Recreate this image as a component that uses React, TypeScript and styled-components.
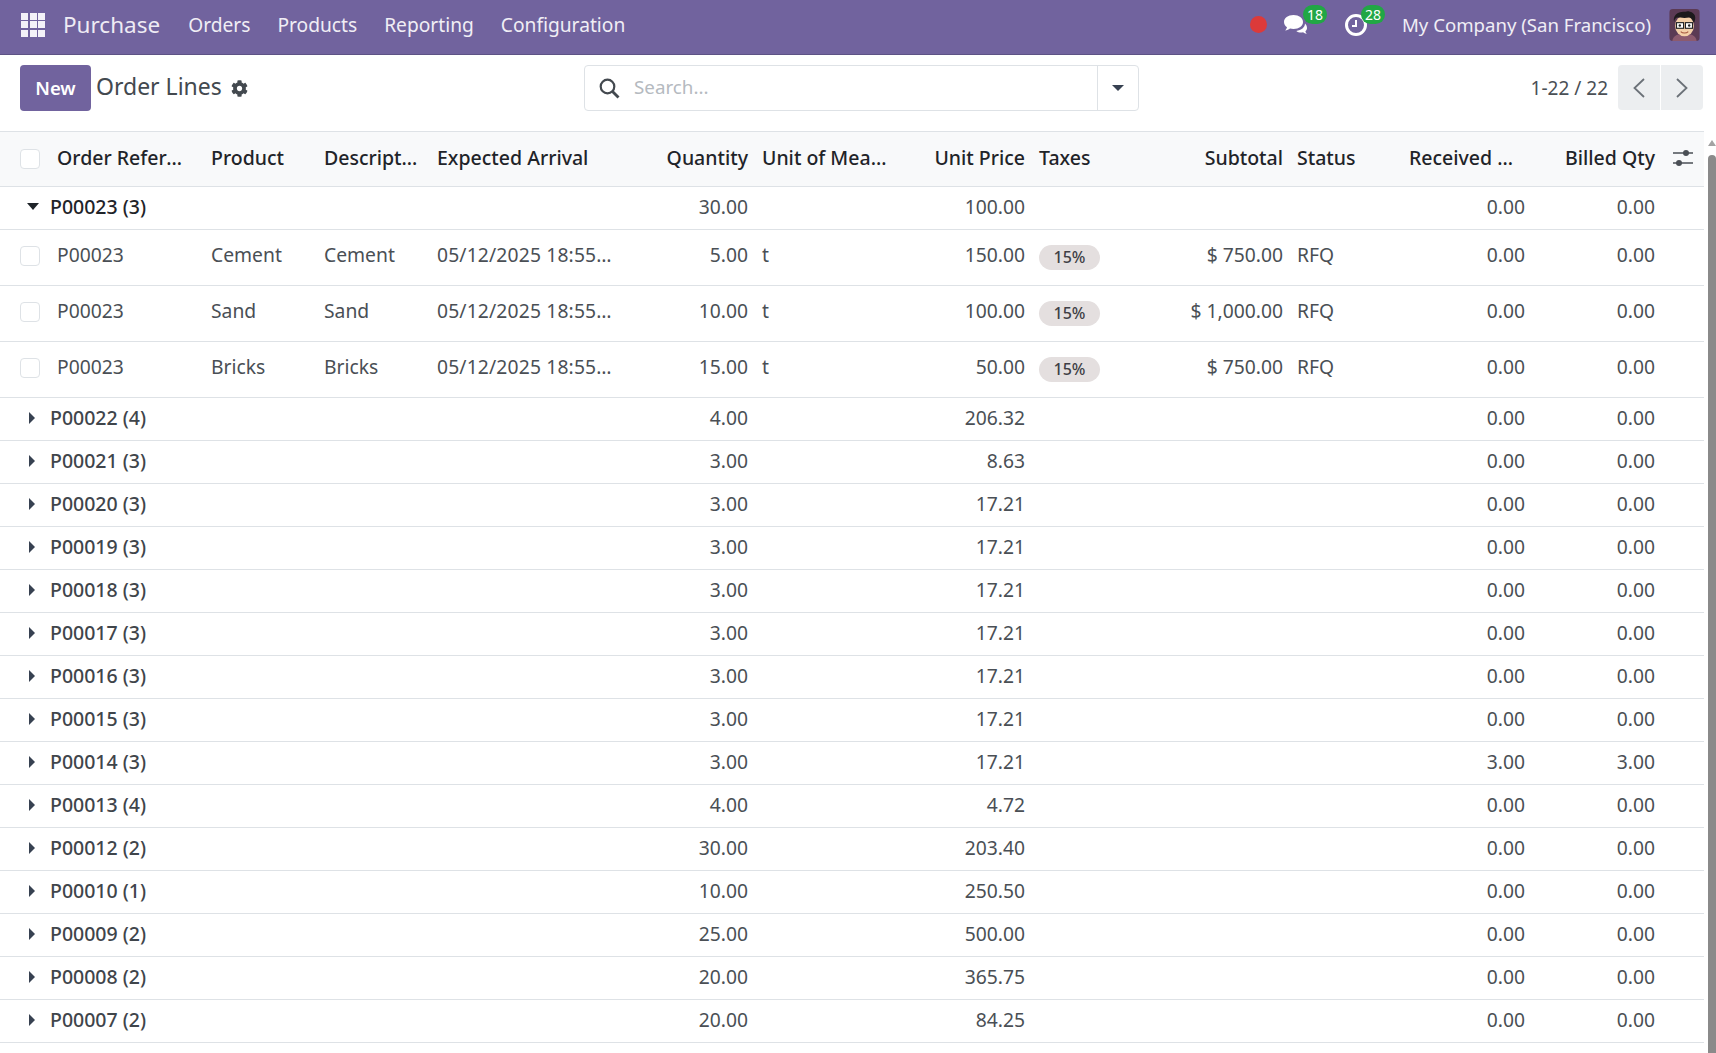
import React from "react";
import styled, { createGlobalStyle } from "styled-components";
import { FaCog } from "react-icons/fa";

const GlobalStyle = createGlobalStyle`
  html, body {
    margin: 0;
    height: 100%;
    overflow: hidden;
    background: #fff;
    font-family: "Noto Sans", "Open Sans", sans-serif;
    font-size: 19.3px;
    color: #4a4f55;
  }
`;

const Page = styled.div`
  width: 1716px;
  height: 1053px;
  display: flex;
  flex-direction: column;
  overflow: hidden;
`;

const Navbar = styled.header`
  height: 55px;
  flex: none;
  background: #71639e;
  border-bottom: 1px solid #5d5285;
  box-sizing: border-box;
  display: flex;
  align-items: center;
  color: #fff;
  padding: 0 16px 5px 21px;
`;

const AppsIcon = styled.div`
  width: 24px;
  height: 24px;
  display: grid;
  grid-template-columns: repeat(3, 7px);
  grid-auto-rows: 7px;
  gap: 1.5px;
  margin-right: 18px;
`;

const AppsDot = styled.span`
  background: #f4f2f8;
`;

const Brand = styled.div`
  font-size: 22.5px;
  margin-right: 28px;
  color: #eeebf4;
`;

const NavMenu = styled.nav`
  display: flex;
  gap: 27px;
  font-size: 19.2px;
  color: #f0eef5;
`;

const NavRight = styled.div`
  margin-left: auto;
  display: flex;
  align-items: center;
`;

const RecordDot = styled.span`
  width: 17px;
  height: 17px;
  border-radius: 50%;
  background: #dc3a3a;
  margin-right: 16px;
`;

const Systray = styled.div`
  position: relative;
  width: 26px;
  height: 26px;
  margin-right: 35px;
  display: flex;
  align-items: center;
`;

const CountBadge = styled.span<{ $left: number }>`
  position: absolute;
  left: ${p => p.$left}px;
  top: -7px;
  height: 19px;
  min-width: 24px;
  padding: 0 1px;
  box-sizing: border-box;
  border-radius: 10px;
  background: #21a745;
  color: #fff;
  font-size: 14px;
  line-height: 19px;
  text-align: center;
`;

const Company = styled.div`
  font-size: 18.6px;
  color: #f0eef5;
  margin-right: 18px;
  margin-left: -3px;
`;

const Avatar = styled.svg`
  width: 31px;
  height: 32px;
  border-radius: 4px;
  display: block;
`;

const ControlPanel = styled.section`
  height: 76px;
  flex: none;
  box-sizing: border-box;
  display: grid;
  grid-template-columns: 1fr 555px 1fr;
  align-items: start;
  padding: 10px 13px 0 20px;
`;

const PanelLeft = styled.div`
  display: flex;
  align-items: center;
`;

const NewButton = styled.button`
  width: 71px;
  height: 46px;
  border: 0;
  border-radius: 4px;
  background: #71639e;
  color: #fff;
  font: 600 18.5px "Noto Sans", sans-serif;
  margin-right: 5px;
  padding: 0 0 2px;
`;

const PageTitle = styled.div`
  font-size: 23px;
  color: #43494f;
  margin-right: 9px;
  padding-bottom: 4px;
`;

const SearchBox = styled.div`
  height: 46px;
  box-sizing: border-box;
  border: 1px solid #dee2e6;
  border-radius: 4px;
  display: flex;
  align-items: center;
`;

const SearchField = styled.div`
  flex: 1;
  display: flex;
  align-items: center;
  gap: 14px;
  padding-left: 14px;
  color: #b5babf;
  font-size: 18.8px;
  line-height: 24px;
`;

const SearchText = styled.span`
  padding-bottom: 2px;
`;

const SearchToggle = styled.div`
  width: 40px;
  height: 100%;
  border-left: 1px solid #dee2e6;
  display: flex;
  align-items: center;
  justify-content: center;
`;

const DownCaret = styled.span`
  border-left: 6px solid transparent;
  border-right: 6px solid transparent;
  border-top: 6px solid #374151;
`;

const Pager = styled.div`
  display: flex;
  align-items: center;
  justify-content: flex-end;
  font-size: 19px;
  color: #4a4f55;
`;

const PagerCount = styled.span`
  margin-right: 10px;
`;

const PagerButton = styled.button<{ $side: "left" | "right" }>`
  width: 42px;
  height: 45px;
  border: 0;
  background: #eceef0;
  padding: 0;
  margin-left: ${p => (p.$side === "right" ? "1px" : "0")};
  border-radius: ${p => (p.$side === "left" ? "4px 0 0 4px" : "0 4px 4px 0")};
  display: flex;
  align-items: center;
  justify-content: center;
`;

const ListArea = styled.div`
  flex: 1;
  min-height: 0;
  position: relative;
  display: flex;
`;

const Table = styled.table`
  width: 1704px;
  height: fit-content;
  flex: none;
  table-layout: fixed;
  border-collapse: collapse;
  font-size: 19.3px;
`;

const HeadRow = styled.tr`
  height: 55px;
  background: #f8f9fa;
  border-top: 1px solid #dee2e6;
  border-bottom: 1px solid #dee2e6;
`;

const Th = styled.th<{ $right?: boolean; $endGap?: number }>`
  padding: 0 ${p => p.$endGap ?? 7}px 3px 7px;
  font-weight: 500;
  font-size: 19.5px;
  color: #1f2429;
  text-align: ${p => (p.$right ? "right" : "left")};
  white-space: nowrap;
  overflow: hidden;
  text-overflow: ellipsis;
`;

const GroupRow = styled.tr`
  height: 43px;
  border-bottom: 1px solid #dee2e6;
`;

const DataRow = styled.tr`
  height: 56px;
  border-bottom: 1px solid #dee2e6;
`;

const Td = styled.td<{ $right?: boolean }>`
  padding: 0 7px 4px;
  text-align: ${p => (p.$right ? "right" : "left")};
  white-space: nowrap;
  overflow: hidden;
  text-overflow: ellipsis;
`;

const LineTd = styled(Td)`
  padding-bottom: 6px;
`;

const DateTd = styled(LineTd)`
  padding-right: 10px;
  letter-spacing: 0.15px;
`;

const TagCell = styled.td`
  padding: 0 7px;
  white-space: nowrap;
`;

const GroupName = styled.td<{ $open?: boolean }>`
  padding: 0 0 3px 27px;
  font-weight: 500;
  font-size: 19.5px;
  color: ${p => (p.$open ? "#1f2429" : "#3f454b")};
`;

const GroupLabel = styled.div`
  display: flex;
  align-items: center;
`;

const RightCaret = styled.span`
  width: 0;
  border-top: 6px solid transparent;
  border-bottom: 6px solid transparent;
  border-left: 6px solid #374151;
  margin-left: 2px;
  margin-right: 15px;
`;

const OpenCaret = styled.span`
  width: 0;
  border-left: 6px solid transparent;
  border-right: 6px solid transparent;
  border-top: 7px solid #1f2429;
  margin-right: 11px;
`;

const CheckBox = styled.span`
  display: block;
  width: 20px;
  height: 20px;
  box-sizing: border-box;
  margin-left: 20px;
  background: #fff;
  border: 1px solid #dee2e6;
  border-radius: 4px;
`;

const SelectCell = styled.td`
  padding: 0 0 3px;
`;

const SelectHead = styled.th`
  padding: 0;
`;

const TaxTag = styled.span`
  display: block;
  width: 61px;
  height: 25px;
  border-radius: 13px;
  background: #e4dfdf;
  color: #3f3f46;
  font-size: 16px;
  font-weight: 500;
  line-height: 24px;
  text-align: center;
`;

const OptionalIcon = styled.svg`
  width: 20px;
  height: 18px;
  display: block;
  margin-left: 4px;
`;

const Scrollbar = styled.div`
  position: absolute;
  right: 0;
  top: 0;
  bottom: 0;
  width: 8px;
`;

const ScrollArrow = styled.div`
  position: absolute;
  top: 9px;
  left: 0;
  border-left: 4px solid transparent;
  border-right: 4px solid transparent;
  border-bottom: 6px solid #a3a3a3;
`;

const ScrollThumb = styled.div`
  position: absolute;
  top: 24px;
  left: 0;
  bottom: 0;
  width: 8px;
  background: #8a8a8a;
  border-radius: 4px 4px 0 0;
`;

const widths = [50, 154, 113, 113, 192, 133, 140, 137, 80, 178, 112, 130, 130, 42];

const lines = [
  { name: "Cement", qty: "5.00", price: "150.00", subtotal: "$ 750.00" },
  { name: "Sand", qty: "10.00", price: "100.00", subtotal: "$ 1,000.00" },
  { name: "Bricks", qty: "15.00", price: "50.00", subtotal: "$ 750.00" },
];

const groups = [
  ["P00022 (4)", "4.00", "206.32", "0.00", "0.00"],
  ["P00021 (3)", "3.00", "8.63", "0.00", "0.00"],
  ["P00020 (3)", "3.00", "17.21", "0.00", "0.00"],
  ["P00019 (3)", "3.00", "17.21", "0.00", "0.00"],
  ["P00018 (3)", "3.00", "17.21", "0.00", "0.00"],
  ["P00017 (3)", "3.00", "17.21", "0.00", "0.00"],
  ["P00016 (3)", "3.00", "17.21", "0.00", "0.00"],
  ["P00015 (3)", "3.00", "17.21", "0.00", "0.00"],
  ["P00014 (3)", "3.00", "17.21", "3.00", "3.00"],
  ["P00013 (4)", "4.00", "4.72", "0.00", "0.00"],
  ["P00012 (2)", "30.00", "203.40", "0.00", "0.00"],
  ["P00010 (1)", "10.00", "250.50", "0.00", "0.00"],
  ["P00009 (2)", "25.00", "500.00", "0.00", "0.00"],
  ["P00008 (2)", "20.00", "365.75", "0.00", "0.00"],
  ["P00007 (2)", "20.00", "84.25", "0.00", "0.00"],
];

function GroupCells({ qty, price, received, billed }: { qty: string; price: string; received: string; billed: string }) {
  return (
    <>
      <Td $right>{qty}</Td>
      <Td />
      <Td $right>{price}</Td>
      <Td />
      <Td />
      <Td />
      <Td $right>{received}</Td>
      <Td $right>{billed}</Td>
      <Td />
    </>
  );
}

export default function App() {
  return (
    <Page>
      <GlobalStyle />
      <Navbar>
        <AppsIcon>
          {Array.from({ length: 9 }).map((_, i) => (
            <AppsDot key={i} />
          ))}
        </AppsIcon>
        <Brand>Purchase</Brand>
        <NavMenu>
          <span>Orders</span>
          <span>Products</span>
          <span>Reporting</span>
          <span>Configuration</span>
        </NavMenu>
        <NavRight>
          <RecordDot />
          <Systray>
            <svg width="26" height="22" viewBox="0 0 26 22" fill="#fff">
              <path d="M10.500 1C5 1 1 4 1 8c0 2.200 1.200 4 3 5.200-.3 1.300-1 2.400-1.800 3.300 1.900-.2 3.600-1 4.800-2 1.100.3 2.200.5 3.500.5 5.500 0 9.500-3 9.500-7s-4-7-9.500-7z" />
              <path d="M22 9.500c0 3.700-3.600 7-8.700 7.400 1.200 1 3 1.600 4.700 1.600.7 0 1.400-.1 2-.3 1 .9 2.300 1.500 3.800 1.700-.7-.8-1.200-1.700-1.400-2.700 1.100-.9 1.600-2 1.600-3.200 0-1.700-.8-3.200-2-4.500z" />
            </svg>
            <CountBadge $left={20}>18</CountBadge>
          </Systray>
          <Systray>
            <svg width="24" height="24" viewBox="0 0 24 24" fill="none" stroke="#fff">
              <circle cx="12" cy="12" r="9.500" strokeWidth="3" />
              <path d="M12 7v6H8" strokeWidth="2" />
            </svg>
            <CountBadge $left={17}>28</CountBadge>
          </Systray>
          <Company>My Company (San Francisco)</Company>
          <Avatar viewBox="0 0 32 34">
            <rect width="32" height="34" fill="#5b3a54" />
            <path d="M3 34c1-6 6-8 13-8s12 2 13 8z" fill="#8c5a6e" />
            <ellipse cx="16" cy="18" rx="10" ry="11" fill="#f4cfa8" />
            <path d="M5 14C3 6 10 2 17 3c3-2 9 1 10 4 1 3 0 6-1 8-1-3-3-6-5-6-5 1-10 0-13 0-2 1-3 3-3 5z" fill="#1d1a1c" />
            <rect x="7.500" y="14.500" width="7.500" height="6" fill="#fff" stroke="#222" strokeWidth="1.200" />
            <rect x="17" y="14.500" width="7.500" height="6" fill="#fff" stroke="#222" strokeWidth="1.200" />
            <circle cx="11" cy="17.500" r="1.300" fill="#222" />
            <circle cx="21" cy="17.500" r="1.300" fill="#222" />
            <path d="M12 24c2 2 6 2 8 0" stroke="#a5563f" strokeWidth="1.200" fill="none" />
          </Avatar>
        </NavRight>
      </Navbar>

      <ControlPanel>
        <PanelLeft>
          <NewButton>New</NewButton>
          <PageTitle>Order Lines</PageTitle>
          <FaCog size={17} color="#43494f" />
        </PanelLeft>
        <SearchBox>
          <SearchField>
            <svg width="21" height="21" viewBox="0 0 21 21" fill="none" stroke="#43494f" strokeWidth="2.200">
              <circle cx="8.500" cy="8.500" r="6.800" />
              <path d="M13.500 13.500l6 6" strokeWidth="2.800" />
            </svg>
            <SearchText>Search...</SearchText>
          </SearchField>
          <SearchToggle>
            <DownCaret />
          </SearchToggle>
        </SearchBox>
        <Pager>
          <PagerCount>1-22 / 22</PagerCount>
          <PagerButton $side="left">
            <svg width="14" height="22" viewBox="0 0 14 22" fill="none" stroke="#6b7178" strokeWidth="1.800">
              <path d="M12 2 2.500 11 12 20" />
            </svg>
          </PagerButton>
          <PagerButton $side="right">
            <svg width="14" height="22" viewBox="0 0 14 22" fill="none" stroke="#6b7178" strokeWidth="1.800">
              <path d="M2 2l9.500 9L2 20" />
            </svg>
          </PagerButton>
        </Pager>
      </ControlPanel>

      <ListArea>
        <Table>
          <colgroup>
            {widths.map((w, i) => (
              <col key={i} width={w} />
            ))}
          </colgroup>
          <thead>
            <HeadRow>
              <SelectHead>
                <CheckBox />
              </SelectHead>
              <Th $endGap={17}>Order Reference</Th>
              <Th>Product</Th>
              <Th $endGap={12}>Description</Th>
              <Th>Expected Arrival</Th>
              <Th $right>Quantity</Th>
              <Th>Unit of Measure</Th>
              <Th $right>Unit Price</Th>
              <Th>Taxes</Th>
              <Th $right>Subtotal</Th>
              <Th>Status</Th>
              <Th $right $endGap={14}>
                Received Qty
              </Th>
              <Th $right>Billed Qty</Th>
              <Th>
                <OptionalIcon viewBox="0 0 20 18" fill="#4a4f55" stroke="#4a4f55">
                  <path d="M0 4h20M0 14h20" strokeWidth="1.400" />
                  <circle cx="13" cy="4" r="3" stroke="none" />
                  <circle cx="6" cy="14" r="3" stroke="none" />
                </OptionalIcon>
              </Th>
            </HeadRow>
          </thead>
          <tbody>
            <GroupRow>
              <GroupName colSpan={5} $open>
                <GroupLabel>
                  <OpenCaret />
                  P00023 (3)
                </GroupLabel>
              </GroupName>
              <GroupCells qty="30.00" price="100.00" received="0.00" billed="0.00" />
            </GroupRow>
            {lines.map(l => (
              <DataRow key={l.name}>
                <SelectCell>
                  <CheckBox />
                </SelectCell>
                <LineTd>P00023</LineTd>
                <LineTd>{l.name}</LineTd>
                <LineTd>{l.name}</LineTd>
                <DateTd>05/12/2025 18:55:32</DateTd>
                <LineTd $right>{l.qty}</LineTd>
                <LineTd>t</LineTd>
                <LineTd $right>{l.price}</LineTd>
                <TagCell>
                  <TaxTag>15%</TaxTag>
                </TagCell>
                <LineTd $right>{l.subtotal}</LineTd>
                <LineTd>RFQ</LineTd>
                <LineTd $right>0.00</LineTd>
                <LineTd $right>0.00</LineTd>
                <LineTd />
              </DataRow>
            ))}
            {groups.map(([name, qty, price, received, billed]) => (
              <GroupRow key={name}>
                <GroupName colSpan={5}>
                  <GroupLabel>
                    <RightCaret />
                    {name}
                  </GroupLabel>
                </GroupName>
                <GroupCells qty={qty} price={price} received={received} billed={billed} />
              </GroupRow>
            ))}
          </tbody>
        </Table>
        <Scrollbar>
          <ScrollArrow />
          <ScrollThumb />
        </Scrollbar>
      </ListArea>
    </Page>
  );
}
